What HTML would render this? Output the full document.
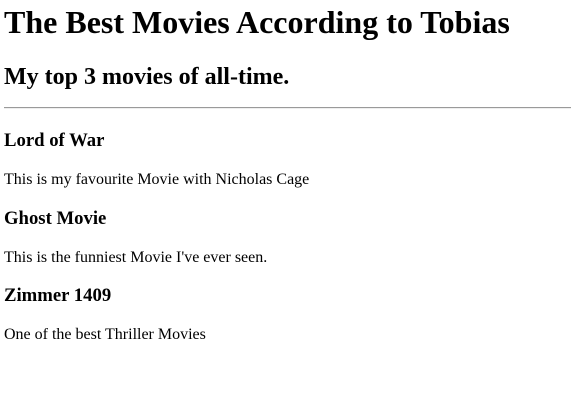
<!DOCTYPE html>
<html>
<head>
<meta charset="utf-8">
<style>
  body {
    margin: 4px;
    font-family: "Liberation Serif", serif;
    color: #000;
    background: #fff;
  }
  h1 { font-size: 32px; margin: 0 0 23.44px 0; }
  h2 { font-size: 24px; margin: 0 0 16px 0; }
  hr { margin: 0; border: 0; border-top: 1px solid #9a9a9a; border-bottom: 1px solid #eee; }
  h3 { font-size: 18.72px; margin: 18.72px 0; }
  hr + h3 { margin-top: 21px; }
  p { font-size: 16px; margin: 16px 0; }
</style>
</head>
<body>
<h1>The Best Movies According to Tobias</h1>
<h2>My top 3 movies of all-time.</h2>
<hr>
<h3>Lord of War</h3>
<p>This is my favourite Movie with Nicholas Cage</p>
<h3>Ghost Movie</h3>
<p>This is the funniest Movie I've ever seen.</p>
<h3>Zimmer 1409</h3>
<p>One of the best Thriller Movies</p>
</body>
</html>
